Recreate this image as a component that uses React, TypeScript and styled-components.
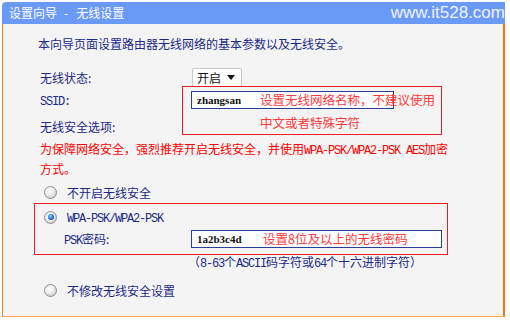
import styled, { createGlobalStyle } from "styled-components";

const NAVY = "#1c2a86";
const RED = "#ec1c24";

const GlobalStyle = createGlobalStyle`
  html, body {
    margin: 0;
    background: #fff;
  }
  body {
    font-family: "Noto Sans CJK SC", sans-serif;
    font-size: 12px;
  }
`;

const Radio = ({ checked }: { checked?: boolean }) => <RadioDot $checked={checked} />;

const WirelessWizard = () => {
  return (
    <Page>
      <Header>
        <HeaderTitle>
          设置向导<Sep>-</Sep>无线设置
        </HeaderTitle>
        <Watermark>www.it528.com</Watermark>
      </Header>
      <Body>
        <Intro>本向导页面设置路由器无线网络的基本参数以及无线安全。</Intro>

        <FieldRow $top={12} $height={24}>
          <Label $width={152}>无线状态:</Label>
          <SelectBox>
            <span>开启</span>
            <svg width="8" height="5" viewBox="0 0 8 5">
              <path d="M0 0h8L4 5z" fill="#111" />
            </svg>
          </SelectBox>
        </FieldRow>

        <FieldRow>
          <Label $width={151}>
            <Latin>SSID:</Latin>
          </Label>
          <FieldAnchor>
            <InputBox $width={203}>
              <InputValue $width={63}>zhangsan</InputValue>
              <Note>设置无线网络名称，不建议使用</Note>
            </InputBox>
            <Callout>
              <Note>中文或者特殊字符</Note>
            </Callout>
          </FieldAnchor>
        </FieldRow>

        <FieldRow $top={4}>
          <Label $width={152}>无线安全选项:</Label>
        </FieldRow>

        <Warning>
          为保障网络安全，强烈推荐开启无线安全，并使用<Latin>WPA-PSK/WPA2-PSK AES</Latin>加密
          <br />
          方式。
        </Warning>

        <OptionRow $top={3} $indent={10}>
          <Radio />
          <OptionText>不开启无线安全</OptionText>
        </OptionRow>

        <Group>
          <OptionRow $indent={0}>
            <Radio checked />
            <OptionText>
              <Latin>WPA-PSK/WPA2-PSK</Latin>
            </OptionText>
          </OptionRow>
          <FieldRow $indent={20}>
            <Label $width={127}>
              <Latin>PSK</Latin>密码:
            </Label>
            <InputBox $width={251}>
              <InputValue $width={66}>1a2b3c4d</InputValue>
              <Note>设置8位及以上的无线密码</Note>
            </InputBox>
          </FieldRow>
        </Group>

        <Hint>
          （<Latin>8-63</Latin>个<Latin>ASCII</Latin>码字符或<Latin>64</Latin>个十六进制字符）
        </Hint>

        <OptionRow $top={8} $indent={10}>
          <Radio />
          <OptionText>不修改无线安全设置</OptionText>
        </OptionRow>
      </Body>
    </Page>
  );
};

const App = () => (
  <>
    <GlobalStyle />
    <WirelessWizard />
  </>
);

const Page = styled.div`
  width: 503px;
  padding: 2px 0 0 2px;
`;

const Header = styled.div`
  height: 22px;
  display: flex;
  align-items: center;
  justify-content: space-between;
  padding-left: 7px;
  background: #6a9af5;
  border-top-left-radius: 4px;
  white-space: nowrap;
`;

const HeaderTitle = styled.span`
  color: #fff;
  font-size: 12px;
  line-height: 22px;
`;

const Sep = styled.span`
  margin: 0 8px 0 7px;
`;

const Watermark = styled.span`
  font-family: "Liberation Sans", Arial, sans-serif;
  font-size: 17px;
  line-height: 22px;
  color: #eef3fd;
`;

const Body = styled.div`
  box-sizing: border-box;
  height: 293px;
  padding: 11px 0 0 31px;
  background: #f4f4f4;
  border-left: 1px solid #f67c1c;
  border-right: 2px solid #f47510;
  border-bottom: 1px solid #f8a24e;
`;

const Latin = styled.span`
  font-family: "Liberation Mono", monospace;
  font-size: 12px;
  letter-spacing: -1.2px;
`;

const Intro = styled.p`
  margin: 0 0 0 4px;
  line-height: 18px;
  color: ${NAVY};
`;

const FieldRow = styled.div<{ $top?: number; $height?: number; $indent?: number }>`
  display: flex;
  align-items: center;
  height: ${({ $height }) => $height ?? 22}px;
  margin-top: ${({ $top }) => $top ?? 0}px;
  padding-left: ${({ $indent }) => $indent ?? 6}px;
`;

const Label = styled.span<{ $width: number }>`
  flex: none;
  width: ${({ $width }) => $width}px;
  color: ${NAVY};
  white-space: nowrap;
`;

const SelectBox = styled.div`
  box-sizing: border-box;
  width: 50px;
  height: 19px;
  display: flex;
  align-items: center;
  justify-content: space-between;
  padding: 0 6px 0 4px;
  background: #fff;
  border: 1px solid #c9c9c9;
  border-radius: 2px;
  color: #111;
  font-size: 12px;
`;

const FieldAnchor = styled.div`
  position: relative;
`;

const InputBox = styled.div<{ $width: number }>`
  box-sizing: border-box;
  width: ${({ $width }) => $width}px;
  height: 18px;
  display: flex;
  align-items: center;
  padding-left: 5px;
  background: #fff;
  border: 1px solid #2c3f98;
  white-space: nowrap;
`;

const InputValue = styled.span<{ $width: number }>`
  flex: none;
  width: ${({ $width }) => $width}px;
  font-family: "Liberation Serif", serif;
  font-size: 11px;
  font-weight: bold;
  color: #111;
`;

const Note = styled.span`
  font-size: 12.5px;
  line-height: 18px;
  color: #ff3a3a;
  white-space: nowrap;
`;

const Callout = styled.div`
  position: absolute;
  left: -9px;
  top: -5px;
  box-sizing: border-box;
  width: 260px;
  height: 49px;
  padding: 27px 0 0 77px;
  border: 1px solid ${RED};
  pointer-events: none;
`;

const Warning = styled.p`
  margin: 3px 0 0 6px;
  line-height: 18px;
  color: #ff0000;
  white-space: nowrap;
`;

const OptionRow = styled.div<{ $top?: number; $indent: number }>`
  display: flex;
  align-items: center;
  gap: 10px;
  height: 22px;
  margin-top: ${({ $top }) => $top ?? 0}px;
  padding-left: ${({ $indent }) => $indent}px;
`;

const OptionText = styled.span`
  color: ${NAVY};
`;

const RadioDot = styled.span<{ $checked?: boolean }>`
  position: relative;
  flex: none;
  box-sizing: border-box;
  width: 13px;
  height: 13px;
  border-radius: 50%;
  border: 1px solid #8f9091;
  background: radial-gradient(circle at 40% 35%, #ffffff 0%, #ececec 45%, #b8b8b8 100%);

  &::after {
    content: "";
    display: ${({ $checked }) => ($checked ? "block" : "none")};
    position: absolute;
    left: 2.5px;
    top: 2.5px;
    width: 6px;
    height: 6px;
    border-radius: 50%;
    background: radial-gradient(circle at 40% 35%, #8fd0ff 0%, #1c6fd0 55%, #0a2f6e 100%);
  }
`;

const Group = styled.div`
  box-sizing: border-box;
  width: 414px;
  padding: 2px 0 4px 9px;
  border: 1px solid ${RED};
`;

const Hint = styled.p`
  margin: 0 0 0 154px;
  line-height: 14px;
  color: ${NAVY};
  white-space: nowrap;
`;

export default App;
